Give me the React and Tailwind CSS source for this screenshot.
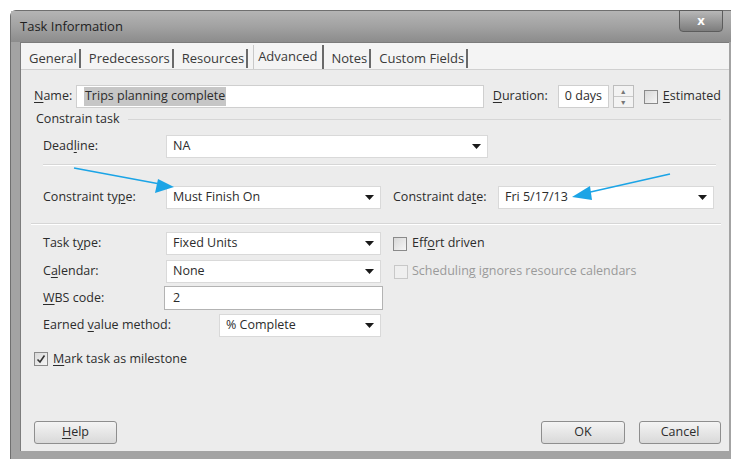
import React from "react";

const U = ({ children }) => <span className="underline underline-offset-2">{children}</span>;

const Caret = () => (
  <svg width="9" height="5" viewBox="0 0 9 5">
    <path d="M0 0 H9 L4.5 5 Z" fill="#1a1a1a" />
  </svg>
);

const Select = ({ value, className }) => (
  <div className={"flex h-[23px] items-center justify-between border border-[#d9d9d9] bg-white pl-[6px] pr-[6px] " + className}>
    <span>{value}</span>
    <Caret />
  </div>
);

const Check = ({ checked, disabled }) => (
  <div
    className={
      disabled
        ? "flex h-[14px] w-[14px] items-center justify-center border border-[#c8c8c8] bg-[#efefef]"
        : "flex h-[14px] w-[14px] items-center justify-center border border-[#8a8a8a] bg-gradient-to-br from-[#d8d8d8] to-[#f6f6f6]"
    }
  >
    {checked && (
      <svg width="10" height="10" viewBox="0 0 10 10">
        <path d="M1.5 5.5 L4 8 L8.5 1.5" stroke="#333" strokeWidth="1.6" fill="none" />
      </svg>
    )}
  </div>
);

const Button = ({ children, className }) => (
  <div
    className={
      "flex h-[23px] items-center justify-center rounded-[3px] border border-[#8e8e8e] bg-gradient-to-b from-[#f4f4f4] to-[#d9d9d9] " +
      className
    }
  >
    {children}
  </div>
);

const Tab = ({ children }) => <span className="pl-[8px] pr-[2px] pt-[6px]">{children}</span>;
const Sep = () => <div className="mt-[6px] h-[19px] w-[2px] bg-[#6a6a6a]" />;

export default function App() {
  return (
    <div
      className="relative h-[459px] w-[731px] overflow-hidden bg-white text-[12.5px] text-[#2c2c2c]"
      style={{ fontFamily: '"Open Sans", "Noto Sans", sans-serif' }}
    >
      <div className="ml-[10px] mt-[10px] flex h-[449px] flex-col rounded-tl-[6px] border-l border-t border-[#6f6f6f] bg-[#a3a3a3]">
        {/* title bar */}
        <div className="relative flex h-[31px] items-center bg-gradient-to-b from-[#b4b4b4] via-[#a2a2a2] to-[#8c8c8c] pl-[9px]">
          <span className="text-[13px] text-[#1e1e1e]">Task Information</span>
          <div className="absolute right-[8px] top-[-1px] flex h-[22px] w-[44px] items-center justify-center rounded-b-[4px] border border-[#5c5c5c] bg-gradient-to-b from-[#b8b8b8] to-[#7d7d7d] text-[13px] font-bold text-white">
            x
          </div>
        </div>
        {/* body */}
        <div className="mb-[8px] ml-[9px] mr-[2px] flex flex-1 flex-col border-l border-t border-[#7c7c7c] bg-[#ececec]">
          <div className="flex h-[26px] items-start bg-[#f4f4f4] text-[13px] text-[#3a3a3a]">
            <Tab>General</Tab>
            <Sep />
            <Tab>Predecessors</Tab>
            <Sep />
            <Tab>Resources</Tab>
            <Sep />
            <div className="ml-[5px] mt-[2px] h-[24px] border-l border-r-2 border-l-[#c9c9c9] border-r-[#6a6a6a] bg-[#f4f4f4] px-[4px] pt-[2px]">
              Advanced
            </div>
            <Tab>Notes</Tab>
            <Sep />
            <Tab>Custom Fields</Tab>
            <Sep />
          </div>
          <div className="relative flex flex-1 flex-col border-t border-[#d0d0d0] pl-[13px] pr-[8px]">
            {/* name row */}
            <div className="mt-[15px] flex h-[23px] items-center">
              <span className="w-[42px]">
                <U>N</U>ame:
              </span>
              <div className="flex h-[23px] w-[408px] items-center border border-[#cfcfcf] bg-white pl-[7px]">
                <span className="bg-[#c6c6c6] px-[1px]">Trips planning complete</span>
              </div>
              <span className="ml-[9px] w-[65px]">
                <U>D</U>uration:
              </span>
              <div className="flex h-[23px] w-[51px] items-center border border-[#cfcfcf] bg-white pl-[6px]">0 days</div>
              <div className="ml-[4px] flex h-[23px] w-[21px] flex-col border border-[#bdbdbd] bg-[#f3f3f3] text-[7px] leading-none text-[#777]">
                <div className="flex flex-1 items-center justify-center border-b border-[#c8c8c8]">▲</div>
                <div className="flex flex-1 items-center justify-center">▼</div>
              </div>
              <div className="ml-[10px]">
                <Check />
              </div>
              <span className="ml-[5px]">
                <U>E</U>stimated
              </span>
            </div>

            {/* constrain task group */}
            <div className="mt-[3px] flex h-[16px] items-center pl-[2px]">
              <span>Constrain task</span>
              <div className="ml-[8px] h-px flex-1 bg-[#d6d6d6]" />
            </div>
            <div className="mt-[8px] flex h-[23px] items-center pl-[9px]">
              <span className="w-[123px]">
                Dead<U>l</U>ine:
              </span>
              <Select value="NA" className="w-[322px]" />
            </div>
            <div className="ml-[9px] mr-[5px] mt-[6px] h-[2px] border-b border-t border-b-white border-t-[#d6d6d6]" />
            <div className="mt-[20px] flex h-[23px] items-center pl-[9px]">
              <span className="w-[123px]">
                Constraint ty<U>p</U>e:
              </span>
              <Select value="Must Finish On" className="w-[215px]" />
              <span className="ml-[12px] w-[105px]">
                Constraint da<U>t</U>e:
              </span>
              <Select value="Fri 5/17/13" className="w-[216px]" />
            </div>
            <div className="-ml-[3px] mt-[14px] h-[2px] border-b border-t border-b-white border-t-[#d6d6d6]" />

            {/* task options */}
            <div className="mt-[7px] flex h-[23px] items-center pl-[9px]">
              <span className="w-[123px]">
                Task t<U>y</U>pe:
              </span>
              <Select value="Fixed Units" className="w-[215px]" />
              <div className="ml-[12px]">
                <Check />
              </div>
              <span className="ml-[5px]">
                Eff<U>o</U>rt driven
              </span>
            </div>
            <div className="mt-[5px] flex h-[23px] items-center pl-[9px]">
              <span className="w-[123px]">
                C<U>a</U>lendar:
              </span>
              <Select value="None" className="w-[215px]" />
              <div className="ml-[13px]">
                <Check disabled />
              </div>
              <span className="ml-[4px] text-[#9a9a9a]">
                Schedulin<U>g</U> ignores resource calendars
              </span>
            </div>
            <div className="mt-[3px] flex h-[24px] items-center pl-[9px]">
              <span className="w-[121px]">
                <U>W</U>BS code:
              </span>
              <div className="flex h-[24px] w-[219px] items-center border border-[#b3b3b3] bg-white pl-[8px]">2</div>
            </div>
            <div className="mt-[4px] flex h-[23px] items-center pl-[9px]">
              <span className="w-[176px]">
                Earned <U>v</U>alue method:
              </span>
              <Select value="% Complete" className="w-[162px]" />
            </div>
            <div className="mt-[14px] flex h-[16px] items-center">
              <Check checked />
              <span className="ml-[5px]">
                <U>M</U>ark task as milestone
              </span>
            </div>

            {/* footer buttons */}
            <div className="mb-[7px] mt-auto flex items-center">
              <Button className="w-[83px]">
                <span>
                  <U>H</U>elp
                </span>
              </Button>
              <div className="flex-1" />
              <Button className="w-[84px]">OK</Button>
              <Button className="ml-[14px] w-[82px]">Cancel</Button>
            </div>
          </div>
        </div>
      </div>

      {/* callout arrows */}
      <svg className="pointer-events-none absolute left-0 top-0" width="731" height="459">
        <line x1="74" y1="168" x2="160" y2="184" stroke="#1ba4e6" strokeWidth="1.6" />
        <path d="M174 187 L155 193 L158 179 Z" fill="#1ba4e6" />
        <line x1="670" y1="174" x2="586" y2="193" stroke="#1ba4e6" strokeWidth="1.6" />
        <path d="M572 197 L590 186 L592 200 Z" fill="#1ba4e6" />
      </svg>
    </div>
  );
}
